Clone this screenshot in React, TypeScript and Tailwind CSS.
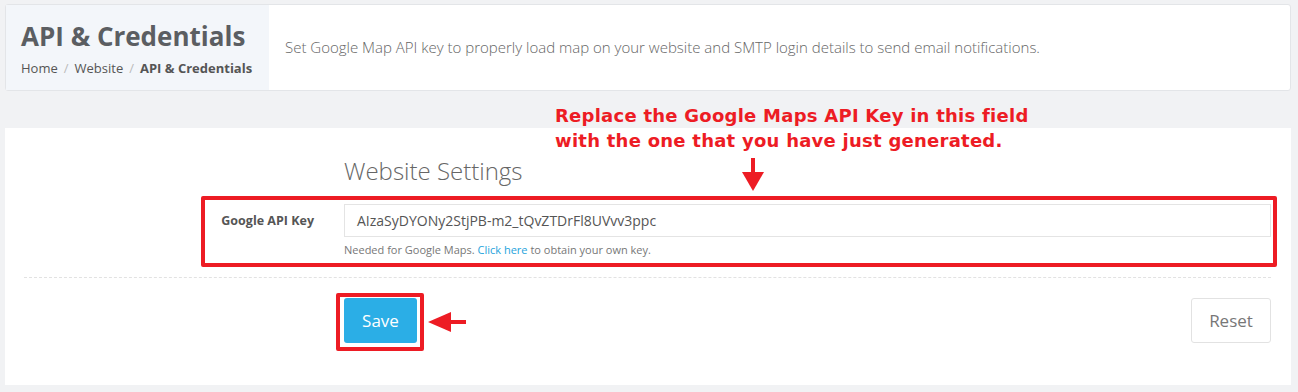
export default function App() {
  return (
    <div className="min-h-screen bg-[#f1f2f4] pl-[5px] pr-[7px] pt-[4px] pb-[7px] font-['Open_Sans',sans-serif] text-[#555]">
      <div className="flex h-[87px] rounded-[3px] border border-[#e3e5e8] bg-white">
        <div className="flex w-[263px] flex-col justify-center bg-[#f3f6fa] pl-[15px]">
          <h1 className="text-[26px] leading-[34px] font-bold text-[#5b5e62]">API &amp; Credentials</h1>
          <div className="mt-[6px] flex items-center gap-[6px] text-[13px] leading-[18px]">
            <span>Home</span>
            <span className="text-[#bbb]">/</span>
            <span>Website</span>
            <span className="text-[#bbb]">/</span>
            <span className="font-bold">API &amp; Credentials</span>
          </div>
        </div>
        <div className="flex items-center pl-[16px] text-[15px] font-light text-[#666]">
          Set Google Map API key to properly load map on your website and SMTP login details to send email notifications.
        </div>
      </div>

      <div className="relative mt-[37px] h-[257px] bg-white pl-[19px] pr-[20px] pt-[27px]">
        <h2 className="ml-[320px] text-[24px] leading-[32px] font-light text-[#666]">Website Settings</h2>

        <div className="mt-[17px] flex">
          <label className="w-[320px] pr-[30px] pt-[9px] text-right text-[12.5px] leading-[16px] font-bold text-[#555]">
            Google API Key
          </label>
          <div className="flex-1">
            <div className="flex h-[33px] items-center border border-[#e4e4e4] pl-[12px] text-[14px] text-[#555]">
              AIzaSyDYONy2StjPB-m2_tQvZTDrFl8UVvv3ppc
            </div>
            <p className="mt-[6px] text-[11px] leading-[14px] text-[#777]">
              Needed for Google Maps. <span className="text-[#1ea3dc]">Click here</span> to obtain your own key.
            </p>
          </div>
        </div>

        <div className="mt-[20px] border-t border-dashed border-[#e2e2e2]" />

        <div className="mt-[20px] flex">
          <div className="w-[320px]" />
          <button className="h-[45px] w-[73px] rounded-[3px] bg-[#2baee6] text-[17px] text-white">Save</button>
          <div className="flex-1" />
          <button className="h-[45px] w-[80px] rounded-[3px] border border-[#e2e2e2] bg-white text-[17px] text-[#777]">
            Reset
          </button>
        </div>

        {/* annotations */}
        <div className="absolute left-[550px] top-[-25px] font-['DejaVu_Sans',sans-serif] text-[18px] leading-[25px] font-bold tracking-[0.25px] text-[#ed1c24]">
          <div>Replace the Google Maps API Key in this field</div>
          <div>with the one that you have just generated.</div>
        </div>
        <svg className="absolute left-[736px] top-[30px]" width="24" height="34" viewBox="0 0 24 34">
          <rect x="10" y="0" width="4" height="18" fill="#ed1c24" />
          <polygon points="1,14 23,14 12,33" fill="#ed1c24" />
        </svg>
        <div className="absolute left-[196px] top-[68px] h-[71px] w-[1076px] rounded-[2px] border-4 border-[#ed1c24]" />
        <div className="absolute left-[331px] top-[165px] h-[58px] w-[88px] rounded-[2px] border-4 border-[#ed1c24]" />
        <svg className="absolute left-[422px] top-[183px]" width="40" height="22" viewBox="0 0 40 22">
          <polygon points="1,11 24,1 24,21" fill="#ed1c24" />
          <rect x="20" y="9" width="19" height="4" fill="#ed1c24" />
        </svg>
      </div>
    </div>
  );
}
